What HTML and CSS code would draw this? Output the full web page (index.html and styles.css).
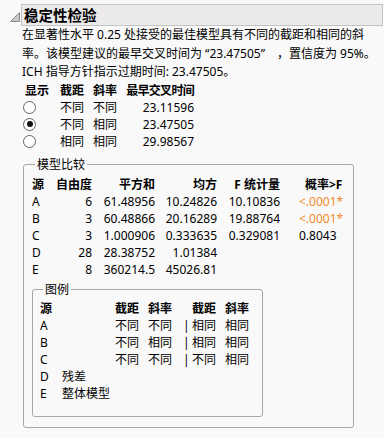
FILE: index.html
```html
<!DOCTYPE html>
<html lang="zh-CN">
<head>
<meta charset="utf-8">
<link rel="stylesheet" href="styles.css">
</head>
<body>
<div class="outline">
  <div class="head">
    <svg class="disclosure" width="10" height="10" viewBox="0 0 10 10"><path d="M0.5 9.5 L9.5 0.5 L9.5 9.5 Z" fill="#c8c8c8" stroke="#8a8a8a" stroke-width="1"/></svg>
    <div class="title">稳定性检验</div>
  </div>
  <div class="content">
    <p class="note">在显著性水平 0.25 处接受的最佳模型具有不同的截距和相同的斜率。该模型建议的最早交叉时间为 “23.47505”　，置信度为 95%。ICH 指导方针指示过期时间: 23.47505。</p>

    <div class="choice">
      <div class="h c1">显示</div><div class="h">截距</div><div class="h">斜率</div><div class="h num tight">最早交叉时间</div>
      <div class="c1"><span class="radio"></span></div><div>不同</div><div>不同</div><div class="num">23.11596</div>
      <div class="c1"><span class="radio on"></span></div><div>不同</div><div>相同</div><div class="num">23.47505</div>
      <div class="c1"><span class="radio"></span></div><div>相同</div><div>相同</div><div class="num">29.98567</div>
    </div>

    <fieldset class="box model">
      <legend>模型比较</legend>
      <div class="mtable">
        <div class="h">源</div><div class="h num">自由度</div><div class="h num">平方和</div><div class="h num">均方</div><div class="h num">F 统计量</div><div class="h prob-h">概率&gt;F</div>
        <div>A</div><div class="num">6</div><div class="num">61.48956</div><div class="num">10.24826</div><div class="num">10.10836</div><div class="prob sig">&lt;.0001*</div>
        <div>B</div><div class="num">3</div><div class="num">60.48866</div><div class="num">20.16289</div><div class="num">19.88764</div><div class="prob sig">&lt;.0001*</div>
        <div>C</div><div class="num">3</div><div class="num">1.000906</div><div class="num">0.333635</div><div class="num">0.329081</div><div class="prob">0.8043</div>
        <div>D</div><div class="num">28</div><div class="num">28.38752</div><div class="num">1.01384</div><div></div><div></div>
        <div>E</div><div class="num">8</div><div class="num">360214.5</div><div class="num">45026.81</div><div></div><div></div>
      </div>

      <fieldset class="box legendbox">
        <legend>图例</legend>
        <div class="ltable">
          <div class="h">源</div><div></div><div class="h">截距</div><div class="h">斜率</div><div></div><div class="h">截距</div><div class="h">斜率</div>
          <div>A</div><div></div><div>不同</div><div>不同</div><div class="bar">|</div><div>相同</div><div>相同</div>
          <div>B</div><div></div><div>不同</div><div>相同</div><div class="bar">|</div><div>相同</div><div>相同</div>
          <div>C</div><div></div><div>不同</div><div>不同</div><div class="bar">|</div><div>不同</div><div>相同</div>
          <div>D</div><div class="span">残差</div>
          <div>E</div><div class="span">整体模型</div>
        </div>
      </fieldset>
    </fieldset>
  </div>
</div>
</body>
</html>
```

FILE: styles.css
```css
html, body {
  margin: 0;
  padding: 0;
  background: #f9f9f9;
}
body {
  font-family: "Noto Sans", "Noto Sans CJK SC", sans-serif;
  font-size: 12px;
  color: #000;
  width: 384px;
  height: 438px;
  overflow: hidden;
}
.outline {
  padding-top: 4px;
}
.head {
  display: flex;
  align-items: center;
}
.disclosure {
  margin-left: 10px;
  margin-right: 1px;
  margin-top: 3px;
}
.title {
  width: 358px;
  height: 20px;
  border: 1px solid #c4c4c4;
  background: #ebebeb;
  font-family: "Noto Sans CJK SC", sans-serif;
  font-weight: bold;
  font-size: 14.5px;
  line-height: 20px;
  padding-left: 2px;
  box-sizing: content-box;
}
.content {
  padding-left: 22px;
}
.note {
  margin: 0;
  width: 356px;
  line-height: 18.5px;
}
.h {
  font-weight: bold;
  white-space: nowrap;
}
.num {
  text-align: right;
  white-space: nowrap;
}
.tight {
  letter-spacing: -0.7px;
}
.choice {
  display: grid;
  grid-template-columns: 37px 33px 33px 68px;
  grid-auto-rows: 17px;
  line-height: 17px;
  margin-left: 1px;
  width: 171px;
}
.choice .c1 {
  padding-left: 2px;
}
.radio {
  display: inline-block;
  width: 11px;
  height: 11px;
  border: 1px solid #666;
  border-radius: 50%;
  background: #fff;
  margin-left: -2px;
  margin-top: 2px;
  position: relative;
  vertical-align: top;
}
.radio.on::after {
  content: "";
  position: absolute;
  left: 2.5px;
  top: 2.5px;
  width: 6px;
  height: 6px;
  border-radius: 50%;
  background: #111;
}
.box {
  margin: 0;
  border: 1px solid #a8a8a8;
  border-radius: 3px;
  min-width: 0;
}
.box legend {
  padding: 0 2px;
  line-height: 17px;
}
.model {
  margin-left: 1px;
  margin-top: 6px;
  width: 331px;
  box-sizing: border-box;
  padding: 3px 0 10px 8px;
}
.model legend {
  margin-left: 3px;
}
.mtable {
  display: grid;
  grid-template-columns: 24px 36px 63px 62px 63px 70px;
  grid-auto-rows: 17px;
  line-height: 17px;
}
.prob {
  padding-left: 19px;
}
.prob-h {
  padding-left: 25px;
}
.sig {
  color: #f08a2a;
}
.legendbox {
  margin-top: 3px;
  width: 231px;
  box-sizing: border-box;
  padding: 2px 0 14px 7px;
}
.legendbox legend {
  margin-left: 3px;
}
.ltable {
  display: grid;
  grid-template-columns: 22px 53px 33px 35px 9px 33px 33px;
  grid-auto-rows: 17px;
  line-height: 17px;
}
.ltable .span {
  grid-column: 2 / -1;
}
.bar {
  padding-left: 0;
}
```
